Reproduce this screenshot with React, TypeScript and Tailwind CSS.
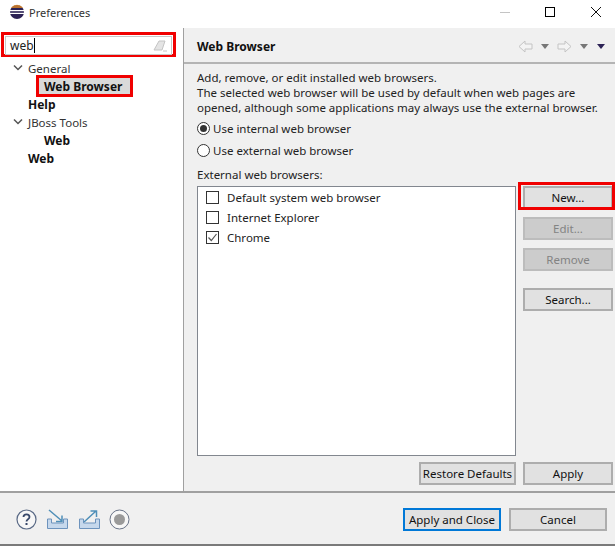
const font = { fontFamily: '"Noto Sans", "Open Sans", sans-serif' };

function EclipseLogo() {
  return (
    <svg width="16" height="16" viewBox="0 0 16 16">
      <circle cx="8" cy="8" r="7" fill="#2c2255" />
      <path d="M3 2.8 A7 7 0 0 1 13 2.8 L14 4 H2 Z" fill="#f7941e" opacity="0.7" />
      <rect x="1" y="6" width="14" height="1.2" fill="#fff" />
      <rect x="1" y="8.8" width="14" height="1.2" fill="#fff" />
    </svg>
  );
}

function Chevron() {
  return (
    <svg width="10" height="8" viewBox="0 0 10 8" className="shrink-0">
      <path d="M1 1.5 L5 5.5 L9 1.5" fill="none" stroke="#555" strokeWidth="1.5" />
    </svg>
  );
}

function TreeRow({ indent, label, bold, open }: { indent: string; label: string; bold?: boolean; open?: boolean }) {
  return (
    <div className={`flex h-[18px] items-center ${indent}`}>
      {open ? <span className="mr-[5px] flex w-[10px]"><Chevron /></span> : null}
      <span className={bold ? "text-[12px] font-bold text-[#111]" : "text-[#333]"}>{label}</span>
    </div>
  );
}

function Btn({ label, disabled, className = "" }: { label: string; disabled?: boolean; className?: string }) {
  return (
    <div
      className={`flex h-[23px] items-center justify-center whitespace-nowrap border-2 ${
        disabled ? "border-[#bcbcbc] bg-[#cccccc] text-[#838383]" : "border-[#adadad] bg-[#e1e1e1] text-[#111]"
      } ${className}`}
    >
      {label}
    </div>
  );
}

function Check({ checked }: { checked?: boolean }) {
  return (
    <span className="flex h-[13px] w-[13px] items-center justify-center border border-[#333] bg-white">
      {checked ? (
        <svg width="11" height="11" viewBox="0 0 11 11">
          <path d="M1.5 5.5 L4.3 8.5 L9.5 2" fill="none" stroke="#555" strokeWidth="1.2" />
        </svg>
      ) : null}
    </span>
  );
}

function Radio({ checked }: { checked?: boolean }) {
  return (
    <span className="flex h-[13px] w-[13px] items-center justify-center rounded-full border border-[#333] bg-white">
      {checked ? <span className="h-[7px] w-[7px] rounded-full bg-[#333]" /> : null}
    </span>
  );
}

function NavArrow({ flip }: { flip?: boolean }) {
  return (
    <svg width="15" height="13" viewBox="0 0 15 13" className={flip ? "rotate-180" : ""}>
      <path d="M1 6.5 L7 1 V4 H14 V9 H7 V12 Z" fill="#f4f4f4" stroke="#c4c4c4" />
    </svg>
  );
}

function Caret({ color }: { color: string }) {
  return (
    <svg width="8" height="5" viewBox="0 0 8 5">
      <path d="M0 0 H8 L4 5 Z" fill={color} />
    </svg>
  );
}

function Tray({ out }: { out?: boolean }) {
  return (
    <svg width="23" height="21" viewBox="0 0 23 21">
      <path d="M1.5 10 V19.5 H21.5 V10 H17.5 V14 H5.5 V10 Z" fill="#c6d8ec" stroke="#6d93bd" />
      {out ? (
        <path d="M6 13 L18 2 M12.5 2 H18.5 V8" fill="none" stroke="#4f8fb8" strokeWidth="1.5" />
      ) : (
        <path d="M3 1 L16 12 M16 6.5 V12.5 H10" fill="none" stroke="#4f8fb8" strokeWidth="1.5" />
      )}
    </svg>
  );
}

export default function App() {
  return (
    <div className="flex h-[546px] w-[615px] flex-col overflow-hidden bg-white text-[11.5px] leading-[15px] text-[#222]" style={font}>
      <div className="flex h-[28px] shrink-0 items-center bg-white pb-[4px] pl-[9px]">
        <EclipseLogo />
        <span className="ml-[4px] text-[11px] text-[#333]">Preferences</span>
        <div className="ml-auto flex items-center">
          <span className="mr-[35px] h-px w-[10px] bg-[#c4c4c4]" />
          <span className="mr-[36px] h-[10px] w-[10px] border border-black" />
          <svg width="10" height="10" viewBox="0 0 10 10" className="mr-[14px]">
            <path d="M0 0 L10 10 M10 0 L0 10" stroke="#111" strokeWidth="1" />
          </svg>
        </div>
      </div>

      <div className="flex h-[463px] shrink-0">
        <div className="w-[183px] shrink-0 bg-white">
          <div className="ml-[1px] mt-[4px] h-[25px] w-[175px] border-[3px] border-[#f00000] p-[1px]">
            <div className="flex h-[19px] items-center border border-[#c8c8c8] pl-[4px] pr-[4px] text-[12px] text-[#222]">
              <span>web</span>
              <span className="h-[15px] w-px bg-black" />
              <svg width="14" height="13" viewBox="0 0 14 13" className="ml-auto">
                <path d="M1 11 L6 2 H12 L9 11 Z" fill="#e4e4e4" stroke="#c4c4c4" />
                <path d="M10 12 H14" stroke="#c4c4c4" />
              </svg>
            </div>
          </div>
          <div className="mt-[2px]">
            <TreeRow indent="pl-[13px]" label="General" open />
            <div className="relative flex h-[18px] items-center pl-[44px]">
              <span className="absolute left-[36px] top-[-2px] h-[22px] w-[97px] border-[3px] border-[#f00000] bg-[#d9d9d9]" />
              <span className="relative text-[12px] font-bold text-[#111]">Web Browser</span>
            </div>
            <TreeRow indent="pl-[28px]" label="Help" bold />
            <TreeRow indent="pl-[13px]" label="JBoss Tools" open />
            <TreeRow indent="pl-[44px]" label="Web" bold />
            <TreeRow indent="pl-[28px]" label="Web" bold />
          </div>
        </div>

        <div className="w-px bg-[#a0a0a0]" />

        <div className="flex min-w-0 flex-1 flex-col bg-[#f0f0f0]">
          <div className="flex h-[36px] shrink-0 items-center border-b-2 border-[#b4b4b4] pl-[13px] pr-[10px] pt-[3px]">
            <span className="text-[12px] font-bold text-[#111]">Web Browser</span>
            <div className="ml-auto flex items-center">
              <NavArrow />
              <span className="ml-[8px] mr-[8px] flex"><Caret color="#777" /></span>
              <NavArrow flip />
              <span className="ml-[8px] mr-[9px] flex"><Caret color="#777" /></span>
              <Caret color="#2c2255" />
            </div>
          </div>

          <div className="flex min-h-0 flex-1 flex-col pl-[13px] pr-[2px] pt-[6px]">
            <p className="whitespace-nowrap text-[#222]">Add, remove, or edit installed web browsers.</p>
            <p className="whitespace-nowrap text-[#222]">The selected web browser will be used by default when web pages are</p>
            <p className="whitespace-nowrap text-[#222]">opened, although some applications may always use the external browser.</p>

            <div className="mt-[2px] flex h-[22px] items-center gap-[3px]"><Radio checked />Use internal web browser</div>
            <div className="flex h-[22px] items-center gap-[3px]"><Radio />Use external web browser</div>
            <div className="mt-[1px] flex h-[24px] items-center">External web browsers:</div>

            <div className="flex h-[276px] gap-[7px]">
              <div className="h-[270px] w-[319px] shrink-0 border border-[#82878f] bg-white pl-[8px]">
                <div className="flex h-[20px] items-center gap-[8px]"><Check />Default system web browser</div>
                <div className="flex h-[20px] items-center gap-[8px]"><Check />Internet Explorer</div>
                <div className="flex h-[20px] items-center gap-[8px]"><Check checked />Chrome</div>
              </div>
              <div className="relative w-[90px] shrink-0">
                <span className="absolute left-[-5px] top-[-4px] h-[28px] w-[97px] border-[3px] border-[#f00000]" />
                <Btn label="New..." />
                <Btn label="Edit..." disabled className="mt-[8px]" />
                <Btn label="Remove" disabled className="mt-[8px]" />
                <Btn label="Search..." className="mt-[17px]" />
              </div>
            </div>

            <div className="flex gap-[7px] pl-[222px]">
              <Btn label="Restore Defaults" className="w-[97px]" />
              <Btn label="Apply" className="w-[90px]" />
            </div>
          </div>
        </div>
      </div>

      <div className="flex h-[53px] shrink-0 items-center border-t-2 border-[#a0a0a0] bg-[#f0f0f0] pl-[16px] pr-[8px] pt-[2px]">
        <svg width="21" height="21" viewBox="0 0 21 21" className="mr-[9px]">
          <circle cx="10.5" cy="10.5" r="9.5" fill="#f7f7f7" stroke="#5a6a86" strokeWidth="1.2" />
          <path d="M7.5 8 C7.5 4.5 13.5 4.5 13.5 8 C13.5 10.5 10.5 10 10.5 12.5" fill="none" stroke="#38486a" strokeWidth="1.8" />
          <rect x="9.5" y="14" width="2" height="2" fill="#38486a" />
        </svg>
        <span className="mr-[9px] flex"><Tray /></span>
        <span className="mr-[8px] flex"><Tray out /></span>
        <svg width="21" height="21" viewBox="0 0 21 21">
          <circle cx="10.5" cy="10.5" r="9.5" fill="#f7f7f7" stroke="#6a7488" />
          <circle cx="10.5" cy="10.5" r="5.5" fill="#9a9a9a" />
        </svg>
        <div className="ml-auto flex gap-[8px]">
          <div className="flex h-[23px] w-[98px] items-center justify-center whitespace-nowrap border-2 border-[#0078d7] bg-[#e1e1e1] text-[#111]">Apply and Close</div>
          <Btn label="Cancel" className="w-[98px]" />
        </div>
      </div>
      <div className="h-[2px] shrink-0 bg-[#7a7a7a]" />
    </div>
  );
}
